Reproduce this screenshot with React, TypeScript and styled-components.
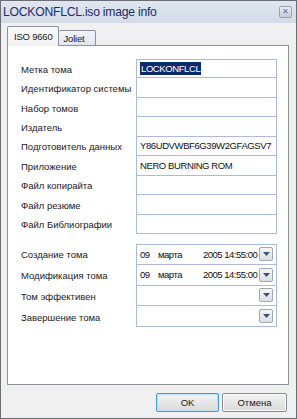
import React from "react";
import styled, { createGlobalStyle } from "styled-components";

const Global = createGlobalStyle`
  html, body { margin: 0; padding: 0; background: #f0f0f0; }
  * { box-sizing: border-box; }
`;

const Window = styled.div`
  width: 297px;
  height: 419px;
  border: 1px solid #6b6f75;
  background: #f0f0f0;
  display: flex;
  flex-direction: column;
  font-family: "Liberation Sans", Arial, sans-serif;
  font-size: 9.5px;
  color: #1a1a1a;
`;

const TitleBar = styled.div`
  height: 22px;
  flex: none;
  display: flex;
  align-items: center;
  justify-content: space-between;
  padding: 0 4px 0 2px;
  background: linear-gradient(#dfe6ef, #d3dce7);
`;

const Title = styled.span`
  font-size: 12.2px;
  color: #1d2d6b;
  letter-spacing: -0.25px;
`;

const CloseButton = styled.div`
  width: 13px;
  height: 12px;
  border: 1px solid #9aa3ad;
  border-radius: 2px;
  background: linear-gradient(#e9ecf0, #c7ccd3);
  display: flex;
  align-items: center;
  justify-content: center;
  color: #5b6ba8;
  font-size: 8px;
  line-height: 1;
`;

const Body = styled.div`
  flex: 1;
  display: flex;
  flex-direction: column;
  padding: 3px 7px 0 6px;
`;

const TabRow = styled.div`
  height: 20px;
  display: flex;
  align-items: flex-end;
  position: relative;
  z-index: 1;
  margin-bottom: -1px;
`;

const Tab = styled.div<{ $active?: boolean }>`
  height: ${(p) => (p.$active ? 20 : 16)}px;
  padding: ${(p) => (p.$active ? "0 5px 0 6px" : "0 10px 0 5px")};
  display: flex;
  align-items: center;
  border: 1px solid #8e9196;
  border-bottom: ${(p) => (p.$active ? "none" : "1px solid #8e9196")};
  border-left: ${(p) => (p.$active ? "1px solid #8e9196" : "none")};
  border-radius: 2px 2px 0 0;
  background: ${(p) =>
    p.$active ? "linear-gradient(#f9f9f9, #f2f2f2)" : "linear-gradient(#f1f4f9, #dfe6f0)"};
  color: #1a1a1a;
  font-size: 9.5px;
  letter-spacing: -0.2px;
`;

const Panel = styled.div`
  flex: 1;
  background: #ffffff;
  border: 1px solid #8e9196;
  padding: 13px 11px 0 13px;
  display: flex;
  flex-direction: column;
  gap: 10px;
`;

const Group = styled.div<{ $row: number }>`
  display: grid;
  grid-template-columns: 1fr 141px;
  grid-auto-rows: ${(p) => p.$row}px;
`;

const Label = styled.div`
  display: flex;
  align-items: center;
  padding-top: 1px;
  white-space: nowrap;
  color: #1a1a1a;
`;

const Field = styled.div<{ $first?: boolean }>`
  border: 1px solid #a9bcd9;
  border-top: ${(p) => (p.$first ? "1px solid #a9bcd9" : "none")};
  display: flex;
  align-items: center;
  padding: 0 3px 0 3px;
  white-space: nowrap;
  overflow: hidden;
  color: #111;
  letter-spacing: -0.4px;
`;

const Selected = styled.span`
  background: #0c2a6e;
  color: #ffffff;
  padding: 1px 1px;
`;

const DateText = styled.span`
  flex: 1;
  display: flex;
  letter-spacing: -0.5px;
`;

const DatePart = styled.span<{ $w: number }>`
  width: ${(p) => p.$w}px;
`;

const DropButton = styled.div`
  width: 14px;
  height: 14px;
  flex: none;
  border: 1px solid #a3a8b0;
  border-radius: 2px;
  background: linear-gradient(#f6f6f6, #dcdee2);
  display: flex;
  align-items: center;
  justify-content: center;
`;

const Footer = styled.div`
  height: 33px;
  flex: none;
  display: flex;
  align-items: center;
  justify-content: flex-end;
  gap: 3px;
  padding: 2px 2px 0 0;
`;

const Button = styled.div<{ $w: number; $default?: boolean }>`
  width: ${(p) => p.$w}px;
  height: 19px;
  border: 1px solid ${(p) => (p.$default ? "#3c9fd6" : "#8a8d92")};
  border-radius: 2px;
  background: linear-gradient(#f3f3f3, #dadada);
  display: flex;
  align-items: center;
  justify-content: center;
  font-size: 9.5px;
  color: #1a1a1a;
  box-shadow: ${(p) => (p.$default ? "inset 0 0 0 1px #b7e2f7" : "inset 0 0 0 1px #fbfbfb")};
`;

const Arrow = () => (
  <svg width="7" height="4" viewBox="0 0 7 4">
    <path d="M0 0 H7 L3.5 4 Z" fill="#3b4e86" />
  </svg>
);

const textFields: [string, React.ReactNode][] = [
  ["Метка тома", <Selected>LOCKONFLCL</Selected>],
  ["Идентификатор системы", ""],
  ["Набор томов", ""],
  ["Издатель", ""],
  ["Подготовитель данных", "Y86UDVWBF6G39W2GFAGSV7"],
  ["Приложение", "NERO BURNING ROM"],
  ["Файл копирайта", ""],
  ["Файл резюме", ""],
  ["Файл Библиографии", ""],
];

const dateFields: [string, boolean][] = [
  ["Создание тома", true],
  ["Модификация тома", true],
  ["Том эффективен", false],
  ["Завершение тома", false],
];

export default function App() {
  return (
    <>
      <Global />
      <Window>
        <TitleBar>
          <Title>LOCKONFLCL.iso image info</Title>
          <CloseButton>✕</CloseButton>
        </TitleBar>
        <Body>
          <TabRow>
            <Tab $active>ISO 9660</Tab>
            <Tab>Joliet</Tab>
          </TabRow>
          <Panel>
            <Group $row={19.45}>
              {textFields.map(([label, value], i) => (
                <React.Fragment key={label}>
                  <Label>{label}</Label>
                  <Field $first={i === 0}>{value}</Field>
                </React.Fragment>
              ))}
            </Group>
            <Group $row={20.8}>
              {dateFields.map(([label, filled], i) => (
                <React.Fragment key={label}>
                  <Label>{label}</Label>
                  <Field $first={i === 0}>
                    <DateText>
                      {filled && (
                        <>
                          <DatePart $w={18}>09</DatePart>
                          <DatePart $w={45}>марта</DatePart>
                          <DatePart $w={56}>2005 14:55:00</DatePart>
                        </>
                      )}
                    </DateText>
                    <DropButton>
                      <Arrow />
                    </DropButton>
                  </Field>
                </React.Fragment>
              ))}
            </Group>
          </Panel>
          <Footer>
            <Button $w={63} $default>
              OK
            </Button>
            <Button $w={65}>Отмена</Button>
          </Footer>
        </Body>
      </Window>
    </>
  );
}
